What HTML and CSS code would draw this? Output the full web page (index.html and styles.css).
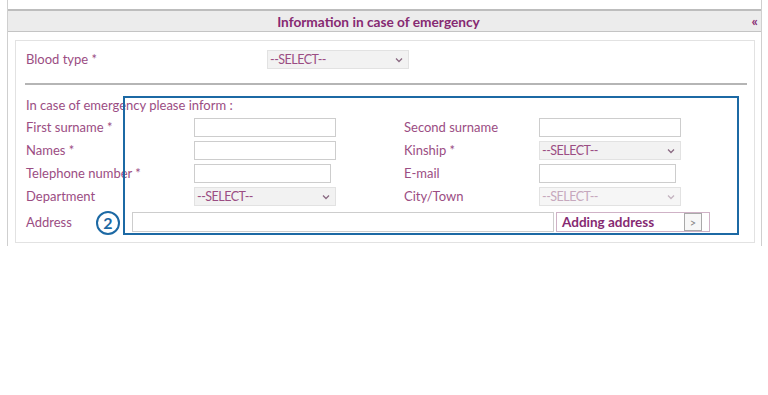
FILE: index.html
```html
<!DOCTYPE html>
<html>
<head>
<meta charset="utf-8">
<link rel="stylesheet" href="styles.css">
</head>
<body>
<div class="panel">
  <div class="panel-head">
    <span class="panel-title">Information in case of emergency</span>
    <span class="collapse">«</span>
  </div>
  <div class="box">
    <div class="blood-row">
      <span class="label blood-label">Blood type *</span>
      <div class="select blood-select"><span>--SELECT--</span><svg class="chev" width="8" height="6" viewBox="0 0 8 6"><path d="M1 1.5 L4 4.5 L7 1.5" fill="none" stroke="#8a6a82" stroke-width="1.3"/></svg></div>
    </div>
    <div class="sep"></div>
    <div class="emergency">
      <div class="label intro">In case of emergency please inform :</div>
      <div class="grid">
        <span class="label">First surname *</span>
        <div class="input w142"></div>
        <span></span>
        <span class="label">Second surname</span>
        <div class="input w142"></div>

        <span class="label">Names *</span>
        <div class="input w142"></div>
        <span></span>
        <span class="label">Kinship *</span>
        <div class="select w142"><span>--SELECT--</span><svg class="chev" width="8" height="6" viewBox="0 0 8 6"><path d="M1 1.5 L4 4.5 L7 1.5" fill="none" stroke="#8a6a82" stroke-width="1.3"/></svg></div>

        <span class="label">Telephone number *</span>
        <div class="input w137"></div>
        <span></span>
        <span class="label">E-mail</span>
        <div class="input w137"></div>

        <span class="label">Department</span>
        <div class="select w142"><span>--SELECT--</span><svg class="chev" width="8" height="6" viewBox="0 0 8 6"><path d="M1 1.5 L4 4.5 L7 1.5" fill="none" stroke="#8a6a82" stroke-width="1.3"/></svg></div>
        <span></span>
        <span class="label">City/Town</span>
        <div class="select w142 disabled"><span>--SELECT--</span><svg class="chev" width="8" height="6" viewBox="0 0 8 6"><path d="M1 1.5 L4 4.5 L7 1.5" fill="none" stroke="#c4b4c0" stroke-width="1.3"/></svg></div>
      </div>
      <div class="address-row">
        <span class="label addr-label">Address</span>
        <div class="input addr-input"></div>
        <div class="adding">
          <span class="adding-text">Adding address</span>
          <span class="adding-btn">&gt;</span>
        </div>
      </div>
      <div class="highlight"></div>
      <div class="badge">2</div>
    </div>
  </div>
</div>
</body>
</html>
```
FILE: styles.css
```css
* { box-sizing: border-box; }
html, body { margin: 0; padding: 0; background: #fff; }
body {
  font-family: Lato, "Liberation Sans", sans-serif;
  font-size: 13px;
  color: #9b4d83;
  width: 768px;
  height: 395px;
  overflow: hidden;
}
.panel {
  margin-left: 7px;
  width: 755px;
  height: 246px;
  border-left: 1px solid #cfcfcf;
  border-right: 1px solid #cfcfcf;
  padding-top: 9px;
}
.panel-head {
  height: 23px;
  background: #ececec;
  border-top: 2px solid #bdbdbd;
  border-bottom: 1px solid #c4c4c4;
  display: flex;
  align-items: center;
  justify-content: center;
  position: relative;
}
.panel-title {
  font-weight: bold;
  color: #862a72;
  font-size: 13.7px;
  margin-left: -12px;
}
.collapse {
  position: absolute;
  right: 3px;
  top: 1px;
  color: #862a72;
  font-size: 14px;
  font-weight: bold;
}
.box {
  margin: 8px 6px 0 7px;
  height: 203px;
  border: 1px solid #e2e2e2;
  padding: 9px 6px 0 10px;
}
.blood-row {
  display: flex;
  align-items: center;
  height: 19px;
}
.blood-label { width: 241px; }
.blood-select { width: 142px; }
.label { line-height: 19px; white-space: nowrap; }
.select {
  height: 19px;
  background: #f2f2f2;
  border: 1px solid #e2e2e2;
  display: flex;
  align-items: center;
  justify-content: space-between;
  padding: 0 5px 0 2px;
  font-size: 12.5px;
  letter-spacing: -0.5px;
  color: #9b4d83;
}
.select.disabled { color: #c6a8bd; background: #f6f6f6; }
.chev { display: block; }
.input {
  height: 19px;
  background: #fff;
  border: 1px solid #cdcdcd;
}
.w142 { width: 142px; }
.w137 { width: 137px; }
.sep {
  margin: 14px 0 0 -1px;
  height: 2px;
  background: #b5b5b5;
  width: 722px;
}
.emergency {
  position: relative;
  margin-top: 11px;
}
.intro { line-height: 19px; }
.grid {
  display: grid;
  grid-template-columns: 168px 142px 68px 135px 142px;
  grid-auto-rows: 19px;
  row-gap: 4px;
  align-items: center;
  margin-top: 3px;
}
.address-row {
  display: flex;
  align-items: center;
  margin-top: 6px;
  height: 20px;
}
.addr-label { width: 106px; }
.addr-input { width: 422px; height: 20px; }
.adding {
  margin-left: 2px;
  width: 154px;
  height: 20px;
  border: 1px solid #cfb2c6;
  display: flex;
  align-items: center;
  justify-content: space-between;
  padding-left: 5px;
  padding-right: 7px;
  white-space: nowrap;
}
.adding-text {
  font-weight: bold;
  color: #862a72;
  font-size: 13.5px;
}
.adding-btn {
  width: 18px;
  height: 18px;
  border: 1px solid #a9a9a9;
  background: #f7f7f7;
  color: #888;
  font-size: 11px;
  display: flex;
  align-items: center;
  justify-content: center;
}
.highlight {
  position: absolute;
  left: 97px;
  top: 0;
  width: 616px;
  height: 139px;
  border: 2px solid #1c69a4;
  pointer-events: none;
}
.badge {
  position: absolute;
  left: 70px;
  top: 115px;
  width: 24px;
  height: 24px;
  border: 2.5px solid #1c69a4;
  border-radius: 50%;
  background: #fff;
  color: #1c69a4;
  font-size: 16px;
  font-weight: bold;
  display: flex;
  align-items: center;
  justify-content: center;
  line-height: 1;
}
```
